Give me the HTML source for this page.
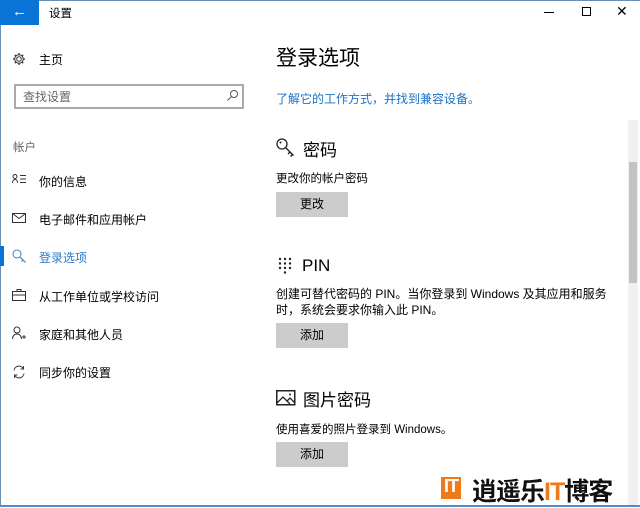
<!DOCTYPE html>
<html><head><meta charset="utf-8"><style>
*{margin:0;padding:0;box-sizing:border-box}
body{width:640px;height:507px;overflow:hidden;background:#fff;font-family:"Liberation Sans","Noto Sans CJK SC",sans-serif;color:#000;position:relative}
.a{position:absolute;white-space:nowrap}
.t12{font-size:12px}
.t11{font-size:11.5px}
.btn{position:absolute;width:72px;height:25px;background:#ccc;font-size:12px;text-align:center;line-height:25px}
.nav{font-size:12px;left:39px}
.ic{position:absolute;left:12px}
</style></head><body>
<div class="a" style="left:0;top:0;width:640px;height:1px;background:#6a8fb0"></div>
<div class="a" style="left:0;top:0;width:1px;height:507px;background:#6a8fb0"></div>
<div class="a" style="left:0;top:505px;width:640px;height:2px;background:#4a90c8"></div>
<div class="a" style="left:0;top:0;width:39px;height:25px;background:#0a74d6;color:#fff;font-size:15px;text-align:center;line-height:24px">&#8592;</div>
<div class="a t11" style="left:49px;top:5px">设置</div>
<div class="a" style="left:544px;top:12px;width:10px;height:1px;background:#000"></div>
<div class="a" style="left:582px;top:7px;width:9px;height:9px;border:1px solid #000"></div>
<div class="a" style="left:616px;top:3px;font-size:14px">✕</div>

<svg class="ic" style="top:52px" width="14" height="14" viewBox="0 0 14 14"><circle cx="7" cy="7" r="2.3" fill="none" stroke="#333"/><path d="M7 1v2M7 11v2M1 7h2M11 7h2M2.8 2.8l1.4 1.4M9.8 9.8l1.4 1.4M2.8 11.2l1.4-1.4M9.8 4.2l1.4-1.4" stroke="#333" stroke-width="1.3"/><circle cx="7" cy="7" r="4.3" fill="none" stroke="#333"/></svg>
<div class="a nav" style="top:51px">主页</div>
<div class="a" style="left:14px;top:84px;width:230px;height:25px;border:2px solid #aaa"></div>
<div class="a t12" style="left:23px;top:88px;color:#666">查找设置</div>
<svg class="a" style="left:226px;top:89px" width="13" height="13" viewBox="0 0 13 13"><circle cx="8" cy="5" r="3.5" fill="none" stroke="#555"/><path d="M5.5 7.5L1.5 11.5" stroke="#555"/></svg>
<div class="a t11" style="left:13px;top:139px;color:#666">帐户</div>

<svg class="ic" style="top:174px" width="15" height="10"><circle cx="3" cy="2.5" r="2" fill="none" stroke="#333"/><path d="M0.5 9c0-2 1-3.5 2.5-3.5S5.5 7 5.5 9M8 1.5h6M8 5h6M8 8.5h6" fill="none" stroke="#333"/></svg>
<div class="a nav" style="top:173px">你的信息</div>
<svg class="ic" style="top:213px" width="14" height="10"><rect x="0.5" y="0.5" width="13" height="9" fill="none" stroke="#333"/><path d="M0.5 0.5l6.5 5 6.5-5" fill="none" stroke="#333"/></svg>
<div class="a nav" style="top:211px">电子邮件和应用帐户</div>
<div class="a" style="left:0;top:246px;width:4px;height:20px;background:#0a74d6"></div>
<svg class="ic" style="top:249px" width="15" height="15" viewBox="0 0 15 15"><circle cx="5" cy="5" r="4" fill="none" stroke="#3a7fc4"/><path d="M8 8l5.5 5.5M11 11l-1.5 1.5" stroke="#3a7fc4" stroke-width="1.2"/></svg>
<div class="a nav" style="top:249px;color:#2a7bc8">登录选项</div>
<svg class="ic" style="top:289px" width="15" height="12"><rect x="0.5" y="2.5" width="13" height="9" fill="none" stroke="#333"/><path d="M5 2.5v-2h4v2M0.5 6h13" fill="none" stroke="#333"/></svg>
<div class="a nav" style="top:288px">从工作单位或学校访问</div>
<svg class="ic" style="top:326px" width="15" height="14"><circle cx="5" cy="4" r="3" fill="none" stroke="#333"/><path d="M0.5 13c0-3 2-5 4.5-5s4.5 2 4.5 5M10 11h4M12 9v4" fill="none" stroke="#333"/></svg>
<div class="a nav" style="top:326px">家庭和其他人员</div>
<svg class="ic" style="top:365px" width="14" height="14" viewBox="0 0 14 14"><path d="M2 5.5A5 5 0 0 1 11.5 4M12 8.5A5 5 0 0 1 2.5 10M11.5 1v3h-3M2.5 13v-3h3" fill="none" stroke="#333"/></svg>
<div class="a nav" style="top:364px">同步你的设置</div>

<div class="a" style="left:276px;top:42px;font-size:21px">登录选项</div>
<div class="a t12" style="left:276px;top:90px;color:#1a73c4">了解它的工作方式，并找到兼容设备。</div>

<svg class="a" style="left:276px;top:138px" width="20" height="20" viewBox="0 0 20 20"><circle cx="6" cy="6" r="5" fill="none" stroke="#222" stroke-width="1.3"/><circle cx="4.5" cy="4.5" r="1" fill="#222"/><path d="M9.5 9.5l8 8M14 14l-2 2M16.5 16.5l-2 2" stroke="#222" stroke-width="1.4"/></svg>
<div class="a" style="left:303px;top:136px;font-size:17px">密码</div>
<div class="a t11" style="left:276px;top:170px">更改你的帐户密码</div>
<div class="btn" style="left:276px;top:192px">更改</div>

<svg class="a" style="left:278px;top:257px" width="14" height="18"><g fill="#222"><circle cx="2" cy="2" r="1.2"/><circle cx="7" cy="2" r="1.2"/><circle cx="12" cy="2" r="1.2"/><circle cx="2" cy="6.5" r="1.2"/><circle cx="7" cy="6.5" r="1.2"/><circle cx="12" cy="6.5" r="1.2"/><circle cx="2" cy="11" r="1.2"/><circle cx="7" cy="11" r="1.2"/><circle cx="12" cy="11" r="1.2"/><circle cx="7" cy="15.5" r="1.2"/></g></svg>
<div class="a" style="left:302px;top:256px;font-size:17px">PIN</div>
<div class="a t12" style="left:276px;top:286px;line-height:16px">创建可替代密码的 PIN。当你登录到 Windows 及其应用和服务<br>时，系统会要求你输入此 PIN。</div>
<div class="btn" style="left:276px;top:323px">添加</div>

<svg class="a" style="left:276px;top:390px" width="20" height="16"><rect x="0.75" y="0.75" width="18" height="14" fill="none" stroke="#222" stroke-width="1.5"/><path d="M1 13l6-6 7 7M11 11l3-3 5 5" fill="none" stroke="#222" stroke-width="1.3"/><circle cx="14" cy="4.5" r="1" fill="#222"/></svg>
<div class="a" style="left:303px;top:386px;font-size:17px">图片密码</div>
<div class="a t11" style="left:276px;top:421px">使用喜爱的照片登录到 Windows。</div>
<div class="btn" style="left:276px;top:442px">添加</div>

<div class="a" style="left:628px;top:120px;width:10px;height:385px;background:#f0f0f0"></div>
<div class="a" style="left:629px;top:162px;width:8px;height:121px;background:#c2c2c2"></div>

<div class="a" style="left:441px;top:477px;width:20px;height:22px;background:#f07a1a"></div>
<div class="a" style="left:444px;top:476px;font-size:18px;font-weight:bold;color:#fff;letter-spacing:-1px">IT</div>
<div class="a" style="left:472px;top:472px;font-size:25px;font-weight:bold;color:#111;letter-spacing:-1px">逍遥乐<span style="color:#f07a1a">IT</span>博客</div>
</body></html>
